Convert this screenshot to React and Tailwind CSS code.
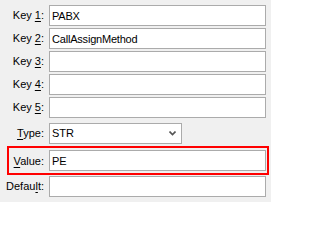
import React from "react";

const font = { fontFamily: '"Liberation Sans", Arial, sans-serif' };

function Field({ value }) {
  return (
    <input
      type="text"
      defaultValue={value}
      readOnly
      className="h-[21px] w-[217px] border border-[#ababab] bg-white pl-[2px] text-[11px] tracking-[-0.2px] text-black outline-none"
      style={font}
    />
  );
}

function Label({ before, u, after, className = "w-[49px]" }) {
  return (
    <div className={`${className} shrink-0 pr-[5px] text-right text-[11px] text-black`}>
      {before}
      <span className="underline underline-offset-2">{u}</span>
      {after}
    </div>
  );
}

export default function App() {
  const keys = [
    ["1", "PABX"],
    ["2", "CallAssignMethod"],
    ["3", ""],
    ["4", ""],
    ["5", ""],
  ];
  return (
    <div
      className="flex h-[202px] w-[271px] flex-col bg-[#f0f0f0] pt-[5px]"
      style={font}
    >
      <div className="flex flex-col gap-[2px]">
        {keys.map(([n, v]) => (
          <div key={n} className="flex items-center">
            <Label before="Key " u={n} after=":" />
            <Field value={v} />
          </div>
        ))}
      </div>

      <div className="mt-[5px] flex items-center">
        <Label before="" u="T" after="ype:" />
        <div className="flex h-[21px] w-[133px] items-center justify-between border border-[#ababab] bg-white pl-[2px] pr-[5px] text-[11px] text-black">
          <span>STR</span>
          <svg width="7" height="5" viewBox="0 0 7 5">
            <path d="M0.5 0.5 L3.5 3.5 L6.5 0.5" fill="none" stroke="#555" strokeWidth="1.6" />
          </svg>
        </div>
      </div>

      <div className="ml-[7px] mr-[2px] mt-[2px] flex h-[29px] items-start border-2 border-[#ff0000] pt-[2px]">
        <Label before="" u="V" after="alue:" className="w-[40px] self-center" />
        <Field value="PE" />
      </div>

      <div className="mt-[1px] flex items-center">
        <Label before="Defau" u="l" after="t:" />
        <Field value="" />
      </div>
    </div>
  );
}
